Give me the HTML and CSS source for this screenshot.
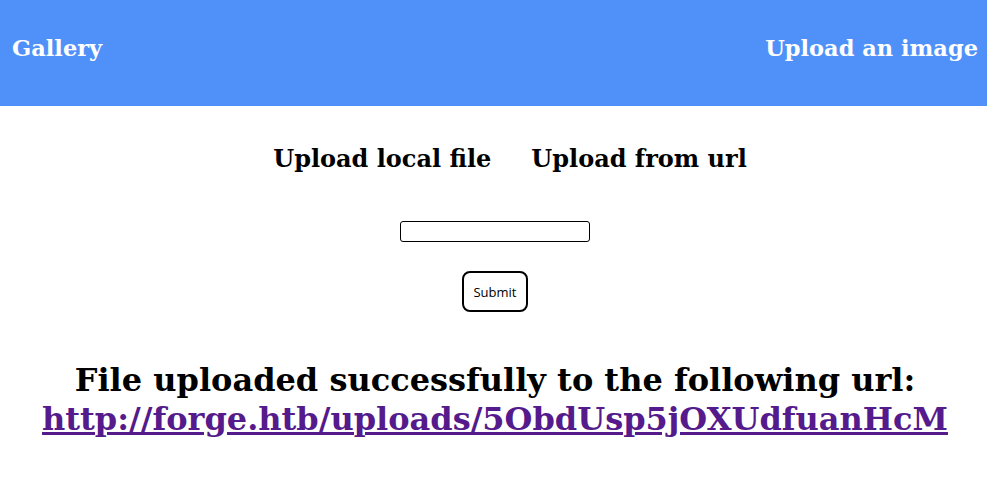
FILE: index.html
```html
<!DOCTYPE html>
<html>
<head>
<meta charset="utf-8">
<link rel="stylesheet" href="styles.css">
</head>
<body>
<header class="topbar">
  <a class="nav-link" href="#">Gallery</a>
  <a class="nav-link" href="#">Upload an image</a>
</header>
<main class="content">
  <div class="tabs">
    <span class="tab">Upload local file</span>
    <span class="tab">Upload from url</span>
  </div>
  <form class="upload-form">
    <input class="url-input" type="text">
    <button class="submit-btn" type="button">Submit</button>
  </form>
  <h1 class="result">File uploaded successfully to the following url:<br><a class="result-link" href="#">http://forge.htb/uploads/5ObdUsp5jOXUdfuanHcM</a></h1>
</main>
</body>
</html>
```
FILE: styles.css
```css
html, body {
  margin: 0;
  padding: 0;
  background: #fff;
  font-family: "DejaVu Serif", serif;
}
.topbar {
  background: #4f91f9;
  height: 106px;
  display: flex;
  justify-content: space-between;
  align-items: flex-start;
  padding: 0 9px 0 12px;
  box-sizing: border-box;
}
.nav-link {
  color: #fff;
  text-decoration: none;
  font-weight: bold;
  font-size: 22.5px;
  margin-top: 35px;
  line-height: 26px;
}
.content {
  display: flex;
  flex-direction: column;
  align-items: center;
  padding-left: 3px;
}
.tabs {
  display: flex;
  gap: 40px;
  margin-top: 38px;
  padding-left: 30px;
}
.tab {
  font-weight: bold;
  font-size: 24px;
  line-height: 30px;
  color: #000;
}
.upload-form {
  display: flex;
  flex-direction: column;
  align-items: center;
  margin-top: 47px;
}
.url-input {
  width: 190px;
  height: 21px;
  box-sizing: border-box;
  border: 1px solid #000;
  border-radius: 3px;
  margin: 0;
  padding: 0;
}
.submit-btn {
  margin-top: 29px;
  width: 66px;
  height: 41px;
  box-sizing: border-box;
  border: 2px solid #000;
  border-radius: 8px;
  background: #fff;
  font-family: "Open Sans", sans-serif;
  font-size: 13px;
  color: #000;
  padding: 0;
}
.result {
  margin: 49px 0 0;
  text-align: center;
  font-size: 32px;
  line-height: 39px;
  font-weight: bold;
  color: #000;
}
.result-link {
  color: #551a8b;
}
```
